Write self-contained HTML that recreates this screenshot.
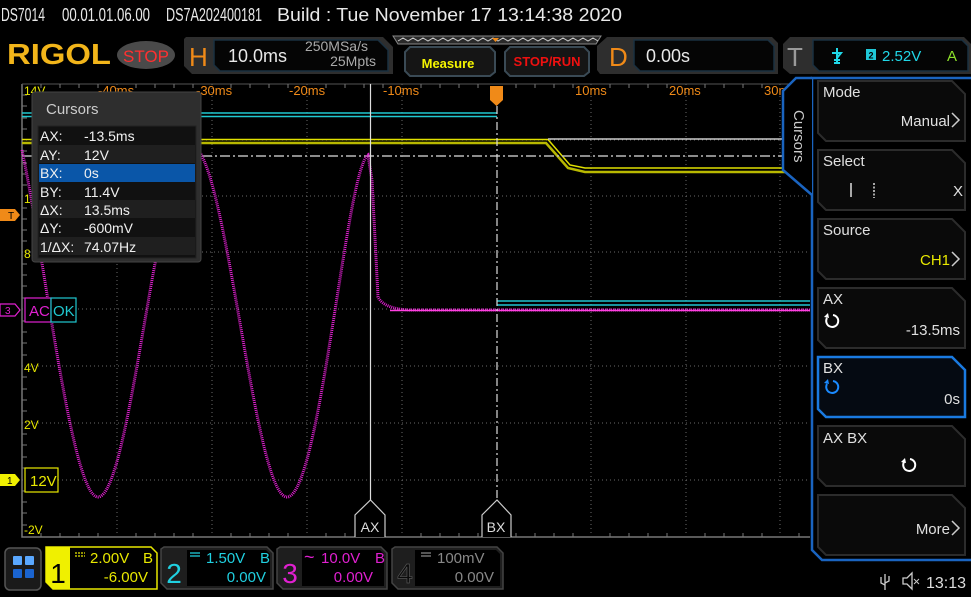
<!DOCTYPE html>
<html><head><meta charset="utf-8"><style>
html,body{margin:0;padding:0;background:#000;overflow:hidden}
svg{display:block}
text{font-family:"Liberation Sans","DejaVu Sans",sans-serif}
</style></head><body>
<svg width="971" height="597" viewBox="0 0 971 597" xmlns="http://www.w3.org/2000/svg">
<rect width="971" height="597" fill="#000"/>
<!-- title -->
<g fill="#e8e8e8" font-size="18">
<text x="1" y="21" textLength="44" lengthAdjust="spacingAndGlyphs">DS7014</text>
<text x="62" y="21" textLength="88" lengthAdjust="spacingAndGlyphs">00.01.01.06.00</text>
<text x="166" y="21" textLength="96" lengthAdjust="spacingAndGlyphs">DS7A202400181</text>
<text x="277" y="21" textLength="345" lengthAdjust="spacingAndGlyphs">Build : Tue November 17 13:14:38 2020</text>
</g>

<!-- top bar -->
<text x="7" y="64" fill="#f2b51a" font-family="Liberation Serif,serif" font-weight="bold" font-size="29" textLength="104" lengthAdjust="spacingAndGlyphs">RIGOL</text>
<ellipse cx="146" cy="55" rx="29" ry="14" fill="#4a4a4a"/>
<text x="146" y="62" fill="#ff3030" font-size="17" text-anchor="middle">STOP</text>

<path d="M186 37 H383 L393 47 V74 H192 L184 66 V39Z" fill="#2e2e2e"/>
<text x="189" y="66" fill="#f08a18" font-size="26">H</text>
<path d="M214 40 H378 L388 50 V71 H220 L214 65Z" fill="#050505" stroke="#1a3040" stroke-width="1.5"/>
<text x="228" y="62" fill="#e8e8e8" font-size="18">10.0ms</text>
<text x="368" y="51" fill="#aaa" font-size="14" text-anchor="end">250MSa/s</text>
<text x="376" y="66" fill="#aaa" font-size="14" text-anchor="end">25Mpts</text>

<path d="M393 36 H601 L596 44 H398Z" fill="#2a2a2a" stroke="#888" stroke-width="1"/>
<path d="M398 41 l5 -3 l5 3 l5 -3 l5 3 l5 -3 l5 3 l5 -3 l5 3 l5 -3 l5 3 l5 -3 l5 3 l5 -3 l5 3 l5 -3 l5 3 l5 -3 l5 3 l5 -3 l5 3 l5 -3 l5 3 l5 -3 l5 3 l5 -3 l5 3 l5 -3 l5 3 l5 -3 l5 3 l5 -3 l5 3 l5 -3 l5 3 l5 -3 l5 3 l5 -3 l5 3 l5 -3 l5 3" fill="none" stroke="#ccc" stroke-width="1"/>
<path d="M492 38 h7 l-3.5 4z" fill="#f08a18"/>

<path d="M410 47 H490 L495 52 V72 L490 76 H410 L405 71 V52Z" fill="#151515" stroke="#3a4a55" stroke-width="2"/>
<text x="448" y="68" fill="#f5f500" font-size="13" font-weight="bold" text-anchor="middle">Measure</text>
<path d="M510 47 H584 L589 52 V72 L584 76 H510 L505 71 V52Z" fill="#151515" stroke="#3a4a55" stroke-width="2"/>
<text x="547" y="66" fill="#ee1010" font-size="13" font-weight="bold" text-anchor="middle">STOP/RUN</text>

<path d="M607 37 H772 L778 43 V74 H600 L597 70 V46Z" fill="#2e2e2e"/>
<text x="609" y="66" fill="#f08a18" font-size="26">D</text>
<path d="M634 40 H768 L774 46 V71 H640 L634 65Z" fill="#050505" stroke="#1a3040" stroke-width="1.5"/>
<text x="646" y="62" fill="#e8e8e8" font-size="18">0.00s</text>

<path d="M790 37 H964 L971 44 V74 H790 L783 68 V44Z" fill="#2e2e2e"/>
<text x="787" y="66" fill="#9a9a9a" font-size="26">T</text>
<path d="M813 40 H962 L968 46 V71 H819 L813 65Z" fill="#050505" stroke="#1a3040" stroke-width="1.5"/>
<path d="M837 48 V62 M832 53 H841 L837 58 M834 60 H840 M834 63 H840" stroke="#20d8e8" stroke-width="2" fill="none"/>
<rect x="866" y="49" width="10" height="11" fill="#20c8d8"/><text x="871" y="58.5" font-size="9" fill="#000" text-anchor="middle" font-weight="bold">2</text>
<text x="882" y="61" fill="#20d8e8" font-size="15">2.52V</text>
<text x="947" y="61" fill="#8ce02a" font-size="15">A</text>

<!-- graticule -->
<g stroke="#6a6a6a" stroke-width="1" stroke-dasharray="1 3">
<path d="M117 84V536 M212 84V536 M307 84V536 M402 84V536 M591 84V536 M686 84V536 M780 84V536"/>
<path d="M22 140H810 M22 196H810 M22 252H810 M22 309H810 M22 366H810 M22 423H810 M22 480H810"/>
</g>
<path d="M22 84 V537 H810" fill="none" stroke="#777" stroke-width="1.5"/>
<path d="M22 84 H810" stroke="#555" stroke-width="1"/>
<g stroke="#777" stroke-width="1">
<path d="M22 95h5M22 106h5M22 118h5M22 129h5M22 151h5M22 163h5M22 174h5M22 185h5M22 208h5M22 219h5M22 230h5M22 241h5M22 264h5M22 275h5M22 286h5M22 298h5M22 321h5M22 332h5M22 343h5M22 355h5M22 377h5M22 389h5M22 400h5M22 411h5M22 434h5M22 445h5M22 457h5M22 468h5M22 491h5M22 502h5M22 513h5M22 525h5"/>
<path d="M41 537v-4M60 537v-4M79 537v-4M98 537v-4M136 537v-4M155 537v-4M174 537v-4M193 537v-4M231 537v-4M250 537v-4M269 537v-4M288 537v-4M326 537v-4M345 537v-4M364 537v-4M383 537v-4M421 537v-4M440 537v-4M459 537v-4M478 537v-4M516 537v-4M535 537v-4M554 537v-4M573 537v-4M610 537v-4M629 537v-4M648 537v-4M667 537v-4M705 537v-4M724 537v-4M743 537v-4M762 537v-4M799 537v-4"/>
<path d="M41 84v4M60 84v4M79 84v4M98 84v4M136 84v4M155 84v4M174 84v4M193 84v4M231 84v4M250 84v4M269 84v4M288 84v4M326 84v4M345 84v4M364 84v4M383 84v4M421 84v4M440 84v4M459 84v4M478 84v4M516 84v4M535 84v4M554 84v4M573 84v4M610 84v4M629 84v4M648 84v4M667 84v4M705 84v4M724 84v4M743 84v4M762 84v4M799 84v4"/>
</g>
<g fill="#f08a18" font-size="13">
<text x="98" y="95">-40ms</text><text x="196" y="95">-30ms</text><text x="289" y="95">-20ms</text><text x="383" y="95">-10ms</text>
<text x="575" y="95">10ms</text><text x="669" y="95">20ms</text><text x="764" y="95">30ms</text>
</g>
<path d="M490 86 h13 v14 l-6.5 6 l-6.5 -6z" fill="#f08a18"/>
<g fill="#e8e800" font-size="12">
<text x="24" y="95">14V</text><text x="24" y="258">8</text><text x="24" y="203">1</text>
<text x="24" y="372">4V</text><text x="24" y="429">2V</text><text x="24" y="534">-2V</text>
</g>

<!-- traces -->
<g stroke="#20c8d0" stroke-width="1.5" fill="none">
<path d="M22 113H497 M22 116.5H497"/>
<path d="M497 301H810 M497 305H810"/>
</g>
<g fill="none">
<path d="M22 139.5H548 L570 165 L585 168H810" stroke="#e0e000" stroke-width="1.5"/>
<path d="M22 143H546 L568 168 L585 172H810" stroke="#b8b800" stroke-width="2.5"/>
<path d="M548 139H810" stroke="#ccc" stroke-width="1.5"/>
<path d="M22 156H810" stroke="#bbb" stroke-width="1.5" stroke-dasharray="10 3 2 3"/>
</g>
<g fill="none" stroke="#e020d0" stroke-width="3" stroke-dasharray="1 1">
<path d="M22 150 C45 260 72 497 98 497 C131 497 158 148 192 146 C226 148 254 497 287 497 C320 497 346 170 368 155 L372 180 L378 297 Q384 309 410 310 H810"/>
</g>
<path d="M390 310.5H810" stroke="#ff40e0" stroke-width="1.5"/>

<!-- cursors -->
<path d="M370.5 84V503" stroke="#ddd" stroke-width="1.2"/>
<path d="M497 106V503" stroke="#ddd" stroke-width="1.2" stroke-dasharray="8 3 2 3"/>
<path d="M355 537 V515 L370.5 500 L385 515 V537" fill="#000" stroke="#ccc" stroke-width="1.2"/>
<text x="370" y="532" fill="#ddd" font-size="14" text-anchor="middle">AX</text>
<path d="M482 537 V515 L497 500 L511 515 V537" fill="#000" stroke="#ccc" stroke-width="1.2"/>
<text x="496" y="532" fill="#ddd" font-size="14" text-anchor="middle">BX</text>

<!-- markers left -->
<path d="M0 209 H15 L20 215 L15 221 H0Z" fill="#f08a18"/><text x="8" y="219" font-size="10" fill="#000">T</text>
<path d="M0 304 H15 L20 310 L15 316 H0Z" fill="none" stroke="#e020d0" stroke-width="1.2"/><text x="5" y="314" font-size="10" fill="#e020d0">3</text>
<rect x="25" y="298" width="26" height="24" fill="#000" stroke="#e020d0" stroke-width="1.2"/><text x="29" y="316" font-size="15" fill="#e020d0">AC</text>
<rect x="51" y="298" width="25" height="24" fill="#000" stroke="#20c8d0" stroke-width="1.2"/><text x="53" y="316" font-size="15" fill="#20c8d0">OK</text>
<path d="M0 474 H15 L20 480 L15 486 H0Z" fill="#f0f000"/><text x="7" y="484" font-size="10" fill="#000">1</text>
<rect x="25" y="468" width="33" height="24" fill="#000" stroke="#e8e800" stroke-width="1.2"/><text x="30" y="486" font-size="15" fill="#e8e800">12V</text>

<!-- cursor box -->
<rect x="32" y="92" width="169" height="170" rx="3" fill="#2e2e2e" stroke="#444"/>
<text x="46" y="114" fill="#ccc" font-size="15">Cursors</text>
<rect x="38" y="126" width="158" height="132" fill="#111" stroke="#222"/>
<rect x="39" y="145" width="156" height="18" fill="#1f1f1f"/>
<rect x="39" y="164" width="156" height="18" fill="#0a56a8"/>
<rect x="39" y="200" width="156" height="18" fill="#1f1f1f"/>
<rect x="39" y="237" width="156" height="18" fill="#1f1f1f"/>
<g fill="#f0f0f0" font-size="14">
<text x="40" y="141">AX:</text><text x="84" y="141">-13.5ms</text>
<text x="40" y="160">AY:</text><text x="84" y="160">12V</text>
<text x="40" y="178">BX:</text><text x="84" y="178">0s</text>
<text x="40" y="197">BY:</text><text x="84" y="197">11.4V</text>
<text x="40" y="215">ΔX:</text><text x="84" y="215">13.5ms</text>
<text x="40" y="233">ΔY:</text><text x="84" y="233">-600mV</text>
<text x="40" y="252">1/ΔX:</text><text x="84" y="252">74.07Hz</text>
</g>

<!-- right panel -->
<path d="M971 78 H812 V550 L822 560 H971" fill="#000" stroke="#1a64c0" stroke-width="2.5"/>
<path d="M812 78 H796 L783 91 V170 L812 195" fill="#000" stroke="#1a64c0" stroke-width="2.5"/>
<text transform="translate(794 110) rotate(90)" fill="#ccc" font-size="15">Cursors</text>
<g fill="#0a0a0a" stroke="#2c2c2c" stroke-width="2">
<path d="M818 81 H952 L965 94 V141 H826 L818 133Z"/>
<path d="M818 150 H952 L965 163 V210 H826 L818 202Z"/>
<path d="M818 219 H952 L965 232 V279 H826 L818 271Z"/>
<path d="M818 288 H952 L965 301 V348 H826 L818 340Z"/>
<path d="M818 426 H952 L965 439 V486 H826 L818 478Z"/>
<path d="M818 495 H952 L965 508 V555 H826 L818 547Z"/>
</g>
<path d="M818 357 H952 L965 370 V417 H826 L818 409Z" fill="#050a12" stroke="#1a7ae0" stroke-width="2.5"/>
<g fill="#e0e0e0" font-size="15">
<text x="823" y="97">Mode</text><text x="950" y="126" text-anchor="end">Manual</text>
<text x="823" y="166">Select</text><text x="953" y="196">X</text>
<text x="823" y="235">Source</text>
<text x="823" y="304">AX</text><text x="960" y="335" text-anchor="end">-13.5ms</text>
<text x="823" y="373">BX</text><text x="960" y="404" text-anchor="end">0s</text>
<text x="823" y="443">AX BX</text>
<text x="950" y="534" text-anchor="end">More</text>
</g>
<text x="950" y="265" text-anchor="end" fill="#e8e800" font-size="15">CH1</text>
<g fill="none" stroke="#ccc" stroke-width="1.5">
<path d="M952 113 L959 120 L952 127"/><path d="M952 252 L959 259 L952 266"/><path d="M952 521 L959 528 L952 535"/>
</g>
<path d="M851 183V197" stroke="#ddd" stroke-width="1.5"/><path d="M874 183V198" stroke="#ddd" stroke-width="1.5" stroke-dasharray="2 1.5"/>
<g fill="none" stroke-width="2">
<path d="M827 318 A6 6 0 1 0 833 315" stroke="#fff"/><path d="M827 384 A6 6 0 1 0 833 381" stroke="#1a8aff"/><path d="M910 459 A6 6 0 1 1 904 462" stroke="#fff"/>
</g>
<path d="M824 317 l4 -4 l1 5z" fill="#fff"/><path d="M824 383 l4 -4 l1 5z" fill="#1a8aff"/><path d="M901 462 l4 -4 l1 5z" fill="#fff"/>

<!-- bottom -->
<rect x="5" y="548" width="36" height="42" rx="5" fill="#1a1a1a" stroke="#555" stroke-width="1.5"/>
<rect x="13" y="556" width="9" height="9" rx="1" fill="#5aa8ff"/><rect x="25" y="556" width="9" height="9" rx="1" fill="#5aa8ff"/>
<rect x="13" y="569" width="9" height="9" rx="1" fill="#1a64d0"/><rect x="25" y="569" width="9" height="9" rx="1" fill="#1a64d0"/>

<!-- CH1 -->
<path d="M46 547 H151 L157 553 V589 H53 L46 582Z" fill="#000" stroke="#e8e800" stroke-width="1.5"/>
<path d="M46 547 H70 V589 H53 L46 582Z" fill="#f0f000"/>
<text x="58" y="583" font-size="28" fill="#000" text-anchor="middle">1</text>
<path d="M75 553h10M75 556h10" stroke="#e8e800" stroke-width="1.2" stroke-dasharray="2 1"/>
<text x="90" y="563" font-size="15" fill="#e8e800">2.00V</text><text x="143" y="563" font-size="15" fill="#e8e800">B</text>
<text x="148" y="582" font-size="15" fill="#e8e800" text-anchor="end">-6.00V</text>

<!-- CH2 -->
<path d="M164 547 H267 L273 553 V589 H167 L161 583 V549Z" fill="#1e1e1e" stroke="#444" stroke-width="1.5"/>
<path d="M187 550 H266 L270 554 V586 H187Z" fill="#000"/>
<text x="174" y="583" font-size="28" fill="#20d0e0" text-anchor="middle">2</text>
<path d="M190 553h10M190 556h10" stroke="#20d0e0" stroke-width="1.2"/>
<text x="206" y="563" font-size="15" fill="#20d0e0">1.50V</text><text x="260" y="563" font-size="15" fill="#20d0e0">B</text>
<text x="266" y="582" font-size="15" fill="#20d0e0" text-anchor="end">0.00V</text>

<!-- CH3 -->
<path d="M280 547 H381 L387 553 V589 H283 L277 583 V549Z" fill="#1e1e1e" stroke="#444" stroke-width="1.5"/>
<path d="M302 550 H380 L384 554 V586 H302Z" fill="#000"/>
<text x="290" y="583" font-size="28" fill="#e020d0" text-anchor="middle">3</text>
<text x="304" y="563" font-size="18" fill="#e020d0">~</text>
<text x="321" y="563" font-size="15" fill="#e020d0">10.0V</text><text x="375" y="563" font-size="15" fill="#e020d0">B</text>
<text x="373" y="582" font-size="15" fill="#e020d0" text-anchor="end">0.00V</text>

<!-- CH4 -->
<path d="M395 547 H497 L503 553 V589 H398 L392 583 V549Z" fill="#1e1e1e" stroke="#444" stroke-width="1.5"/>
<path d="M415 550 H496 L500 554 V586 H415Z" fill="#000"/>
<text x="405" y="583" font-size="28" fill="#0a0a0a" stroke="#555" stroke-width="0.7" text-anchor="middle">4</text>
<path d="M421 553h10M421 556h10" stroke="#888" stroke-width="1.2"/>
<text x="437" y="563" font-size="15" fill="#888">100mV</text>
<text x="494" y="582" font-size="15" fill="#888" text-anchor="end">0.00V</text>

<path d="M885 574 V590 M881 577 V583 L885 585 M889 576 V581 L885 583" stroke="#ccc" stroke-width="1.3" fill="none"/>
<path d="M903 578 h4 l5 -5 v16 l-5 -5 h-4z" fill="none" stroke="#ccc" stroke-width="1.3"/>
<path d="M914 579 l5 5 M919 579 l-5 5" stroke="#ccc" stroke-width="1"/>
<text x="926" y="588" font-size="16" fill="#ddd">13:13</text>
</svg>
</body></html>
